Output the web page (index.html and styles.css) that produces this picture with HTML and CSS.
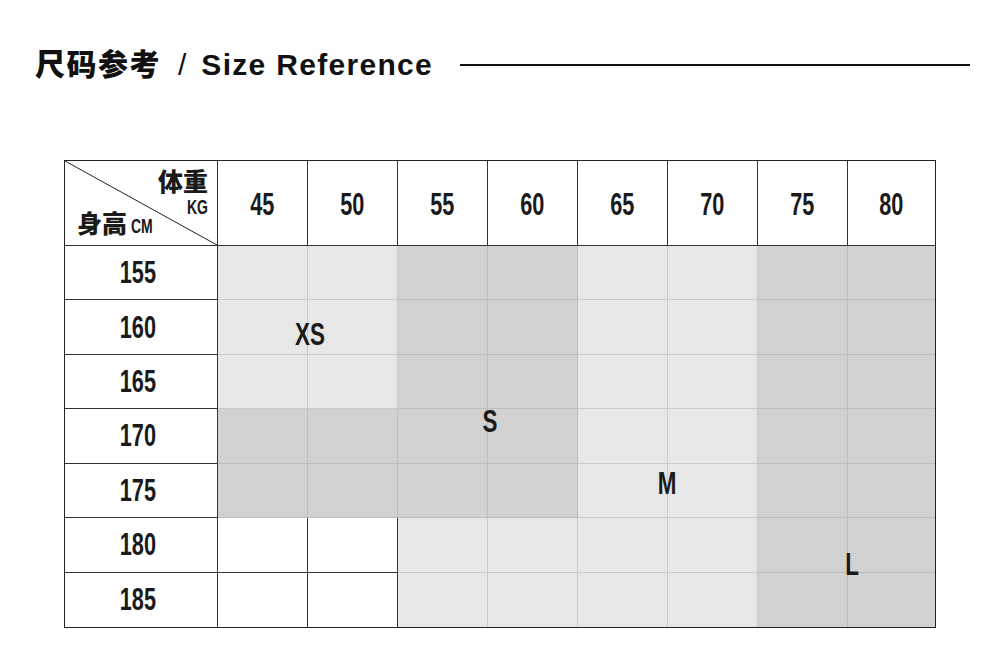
FILE: index.html
```html
<!DOCTYPE html>
<html lang="zh">
<head>
<meta charset="utf-8">
<link rel="stylesheet" href="styles.css">
</head>
<body>
<div class="page">
  <div class="title-row">
    <h1 class="title"><span class="t-cn">尺码参考</span><span class="t-sl">/</span><span class="t-en">Size Reference</span></h1>
    <div class="title-line"></div>
  </div>
  <div class="chart">
    <div class="grid">
      <div class="cell corner">
        <svg class="diag" viewBox="0 0 152 84" preserveAspectRatio="none"><line x1="0" y1="0" x2="152" y2="84" stroke="#222" stroke-width="1"/></svg>
        <div class="wt"><span class="cn">体重</span><span class="unit n">KG</span></div>
        <div class="ht"><span class="cn">身高</span><span class="unit n">CM</span></div>
      </div>
      <div class="cell head"><span class="n">45</span></div>
      <div class="cell head"><span class="n">50</span></div>
      <div class="cell head"><span class="n">55</span></div>
      <div class="cell head"><span class="n">60</span></div>
      <div class="cell head"><span class="n">65</span></div>
      <div class="cell head"><span class="n">70</span></div>
      <div class="cell head"><span class="n">75</span></div>
      <div class="cell head last-col"><span class="n">80</span></div>

      <div class="cell rowh"><span class="n">155</span></div>
      <div class="cell lt"></div><div class="cell lt"></div>
      <div class="cell dk"></div><div class="cell dk"></div>
      <div class="cell lt"></div><div class="cell lt"></div>
      <div class="cell dk"></div><div class="cell dk last-col"></div>

      <div class="cell rowh"><span class="n">160</span></div>
      <div class="cell lt"></div><div class="cell lt"></div>
      <div class="cell dk"></div><div class="cell dk"></div>
      <div class="cell lt"></div><div class="cell lt"></div>
      <div class="cell dk"></div><div class="cell dk last-col"></div>

      <div class="cell rowh"><span class="n">165</span></div>
      <div class="cell lt"></div><div class="cell lt"></div>
      <div class="cell dk"></div><div class="cell dk"></div>
      <div class="cell lt"></div><div class="cell lt"></div>
      <div class="cell dk"></div><div class="cell dk last-col"></div>

      <div class="cell rowh"><span class="n">170</span></div>
      <div class="cell dk"></div><div class="cell dk"></div>
      <div class="cell dk"></div><div class="cell dk"></div>
      <div class="cell lt"></div><div class="cell lt"></div>
      <div class="cell dk"></div><div class="cell dk last-col"></div>

      <div class="cell rowh"><span class="n">175</span></div>
      <div class="cell dk"></div><div class="cell dk"></div>
      <div class="cell dk"></div><div class="cell dk"></div>
      <div class="cell lt"></div><div class="cell lt"></div>
      <div class="cell dk"></div><div class="cell dk last-col"></div>

      <div class="cell rowh"><span class="n">180</span></div>
      <div class="cell wh"></div><div class="cell wh"></div>
      <div class="cell lt"></div><div class="cell lt"></div>
      <div class="cell lt"></div><div class="cell lt"></div>
      <div class="cell dk"></div><div class="cell dk last-col"></div>

      <div class="cell rowh last-row"><span class="n">185</span></div>
      <div class="cell wh last-row"></div><div class="cell wh last-row"></div>
      <div class="cell lt last-row"></div><div class="cell lt last-row"></div>
      <div class="cell lt last-row"></div><div class="cell lt last-row"></div>
      <div class="cell dk last-row"></div><div class="cell dk last-row last-col"></div>
    </div>
    <span class="size-label lbl-xs"><span class="n">XS</span></span>
    <span class="size-label lbl-s"><span class="n">S</span></span>
    <span class="size-label lbl-m"><span class="n">M</span></span>
    <span class="size-label lbl-l"><span class="n">L</span></span>
  </div>
</div>
</body>
</html>
```

FILE: styles.css
```css
html, body {
  margin: 0;
  padding: 0;
  background: #fff;
}
.page {
  width: 1000px;
  height: 661px;
  overflow: hidden;
  color: #1a1a1a;
}
.title-row {
  display: flex;
  align-items: center;
  padding: 43px 30px 0 35px;
  height: 40px;
}
.title {
  margin: 0;
  display: flex;
  align-items: baseline;
  font-weight: 700;
  font-size: 30px;
  line-height: 40px;
  color: #111;
  white-space: nowrap;
}
.t-cn {
  font-family: "Noto Sans CJK SC", sans-serif;
  font-weight: 900;
  letter-spacing: 1.5px;
}
.t-sl {
  font-family: "Liberation Sans", sans-serif;
  font-weight: 400;
  margin: 0 15px 0 17px;
}
.t-en {
  font-family: "Liberation Sans", sans-serif;
  font-weight: 700;
  letter-spacing: 1.3px;
}
.title-line {
  flex: 1;
  height: 2px;
  background: #111;
  margin-left: 27px;
  margin-top: 4px;
}
.chart {
  position: relative;
  margin: 77px 0 0 64px;
  width: 872px;
}
.grid {
  display: grid;
  grid-template-columns: 153px repeat(7, 90px) 1fr;
  grid-template-rows: 85px repeat(7, 54.43px);
  border: 1px solid #222;
  box-sizing: border-box;
  width: 872px;
}
.cell {
  box-sizing: border-box;
  border-right: 1px solid #333;
  border-bottom: 1px solid #333;
  display: flex;
  align-items: center;
  justify-content: center;
  font-family: "Liberation Sans", sans-serif;
  font-weight: 700;
  font-size: 31px;
  color: #1a1a1a;
}
.n {
  display: inline-block;
  font-family: "Liberation Sans", sans-serif;
  font-weight: 700;
  transform: scaleX(0.7);
  line-height: 1;
}
.head .n {
  margin-top: 2px;
}
.head, .rowh {
  background: #fff;
}
.rowh {
  padding-right: 6px;
}
.lt {
  background: #e7e7e7;
  border-color: #c9c9c9;
}
.dk {
  background: #d1d1d1;
  border-color: #bdbdbd;
}
.wh {
  background: #fff;
}
.last-col {
  border-right: none;
}
.last-row {
  border-bottom: none;
}
.corner {
  position: relative;
  display: block;
}
.diag {
  position: absolute;
  left: 0;
  top: 0;
  width: 100%;
  height: 100%;
}
.corner .cn {
  font-family: "Noto Sans CJK SC", sans-serif;
  font-weight: 900;
  font-size: 25px;
  line-height: 27px;
}
.corner .unit {
  font-size: 20px;
}
.wt {
  position: absolute;
  right: 9px;
  top: 6px;
  display: flex;
  flex-direction: column;
  align-items: flex-end;
}
.wt .unit {
  transform-origin: right center;
  margin-top: 3px;
}
.ht {
  position: absolute;
  left: 12px;
  top: 48px;
  display: flex;
  align-items: baseline;
  gap: 4px;
}
.ht .unit {
  transform-origin: left center;
  font-size: 20px;
}
.size-label {
  position: absolute;
  transform: translate(-50%, -50%);
  font-family: "Liberation Sans", sans-serif;
  font-weight: 700;
  font-size: 32px;
  line-height: 1;
  color: #1a1a1a;
}
.lbl-xs { left: 246px; top: 174px; }
.lbl-s { left: 426px; top: 261px; }
.lbl-m { left: 603px; top: 323px; }
.lbl-l { left: 788px; top: 404px; }
```
